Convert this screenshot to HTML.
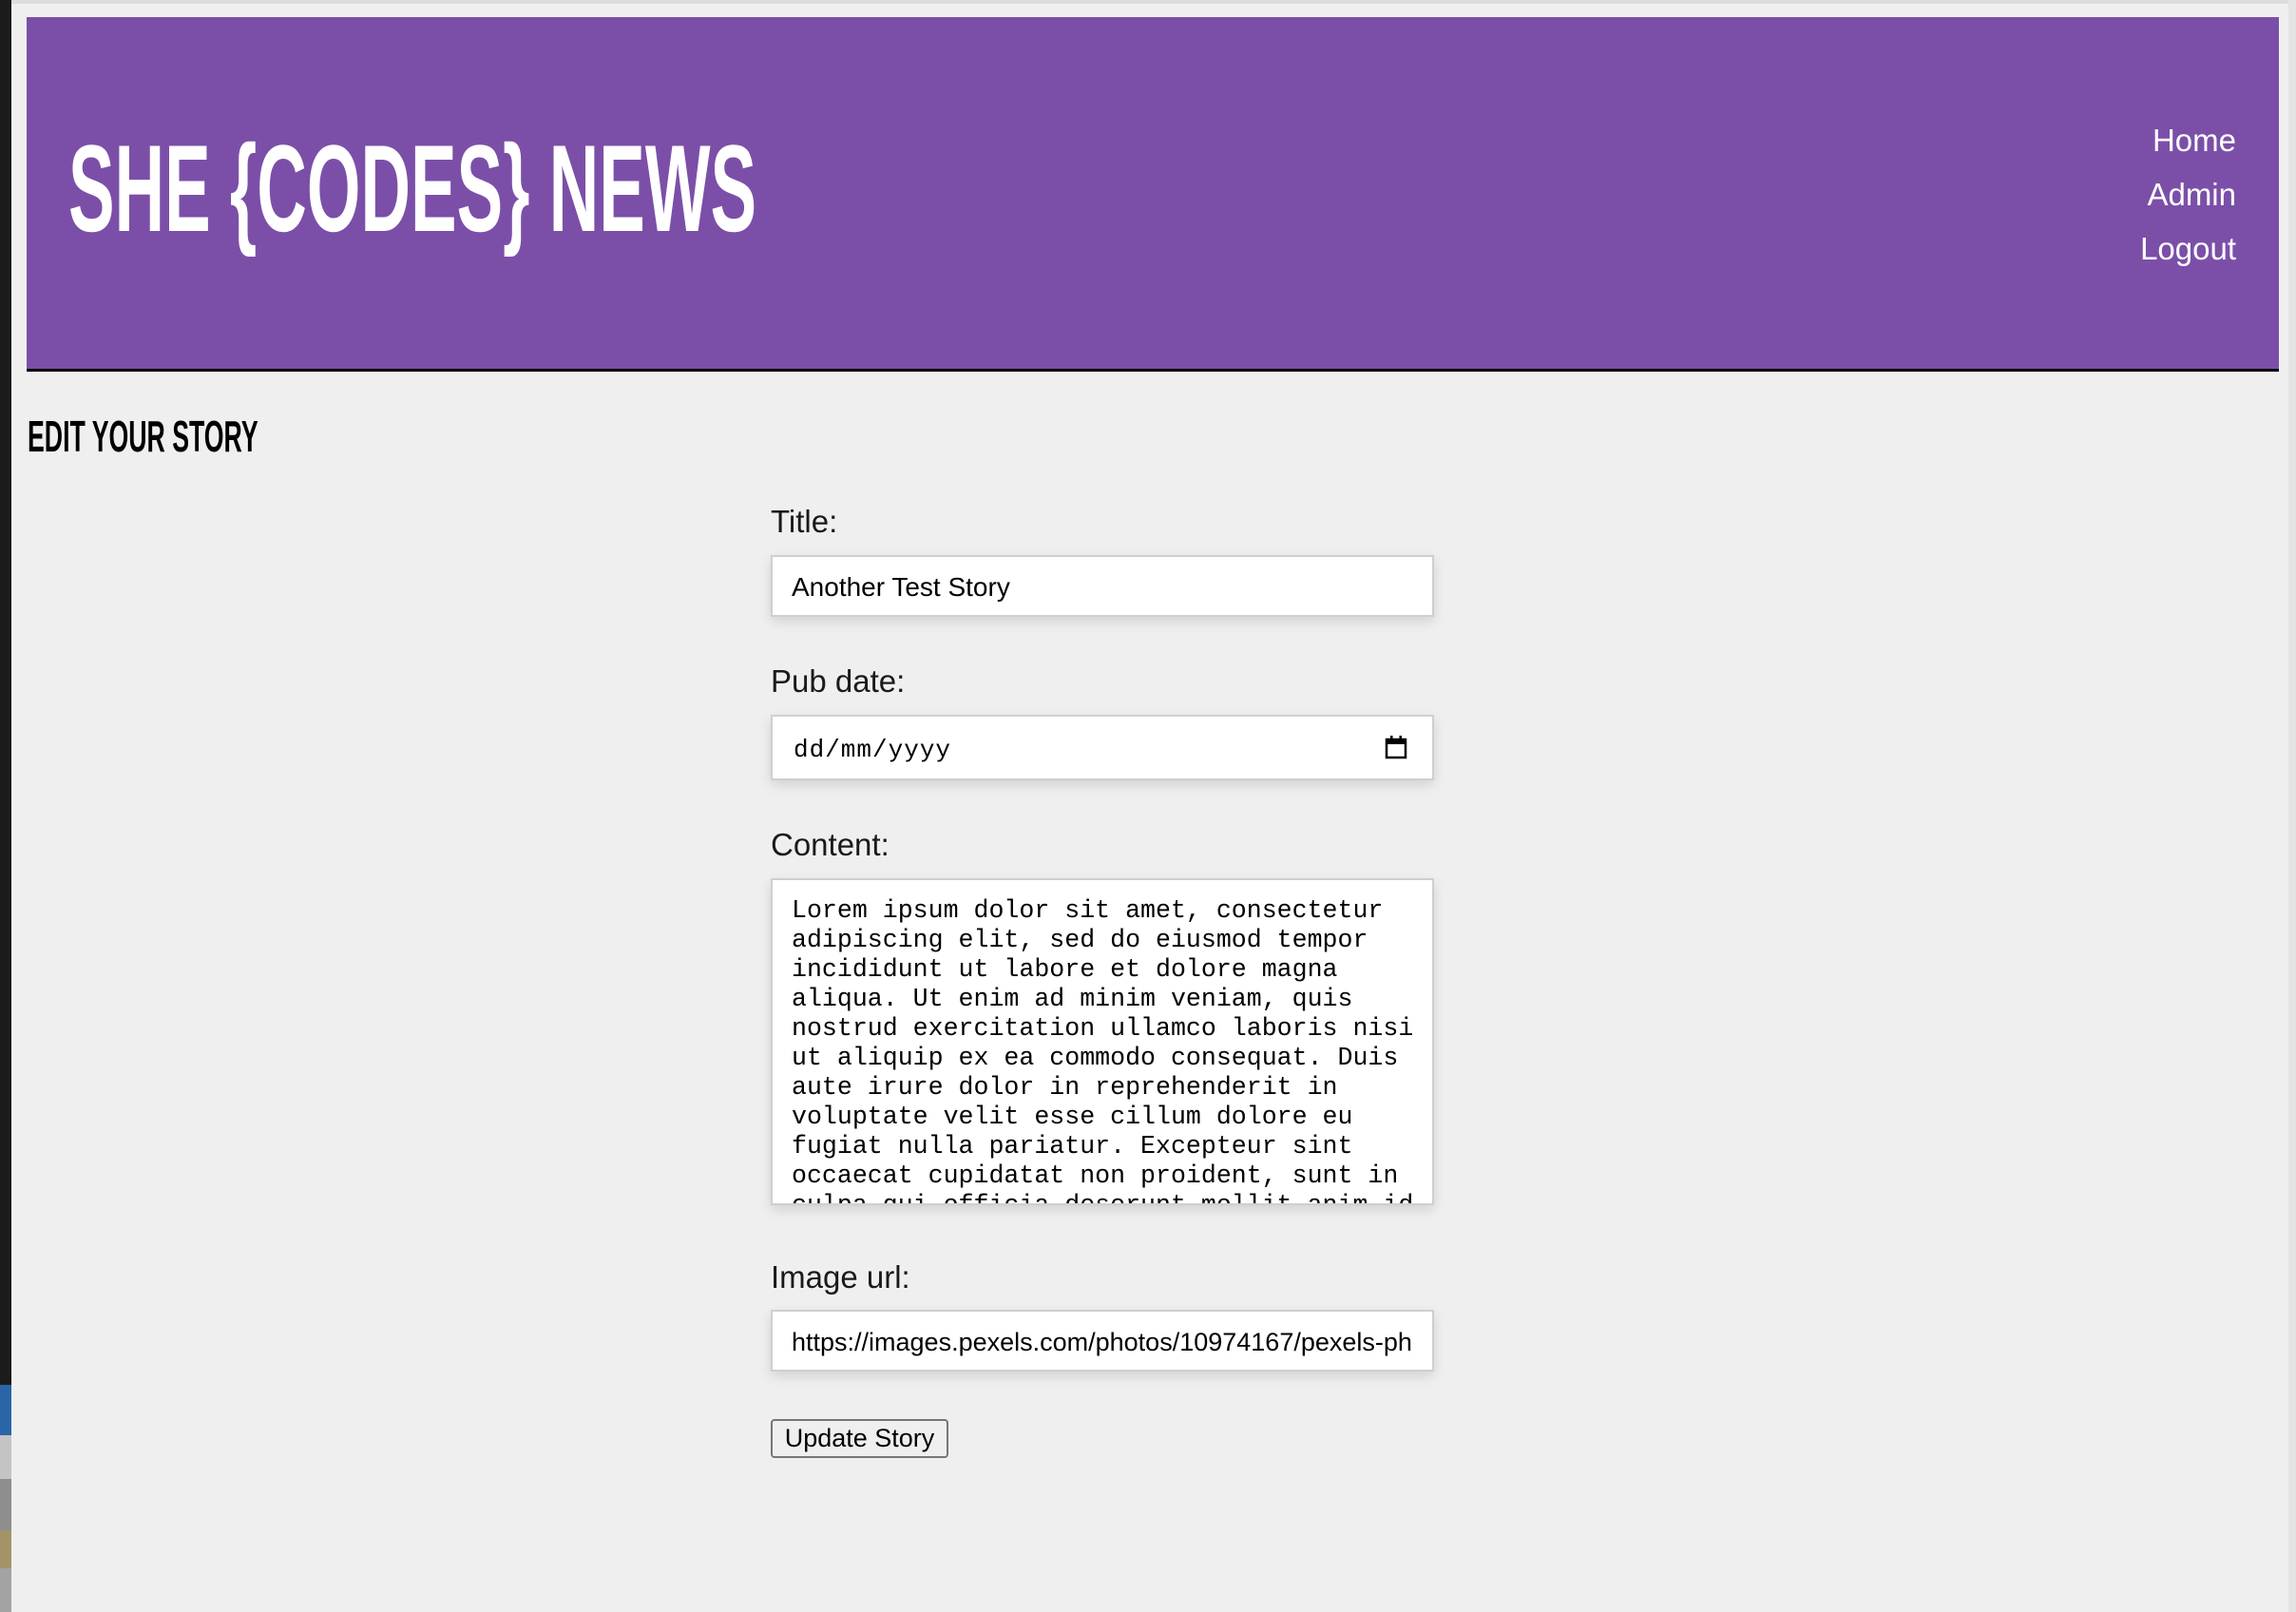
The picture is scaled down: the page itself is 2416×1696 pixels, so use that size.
<!DOCTYPE html>
<html><head><meta charset="utf-8"><style>
*{box-sizing:border-box;margin:0;padding:0}
body{width:2416px;height:1696px;background:#efefef;position:relative;overflow:hidden;font-family:"Liberation Sans",sans-serif}
.abs{position:absolute}
.lbl{position:absolute;left:811px;font-size:33px;color:#1a1a1a;line-height:1}
.inp{position:absolute;left:811px;width:698px;background:#fff;border:2px solid #cfcfcf;box-shadow:0 5px 12px rgba(0,0,0,.12)}
</style></head><body>
<div class="abs" style="left:0;top:0;width:2416px;height:4px;background:#dcdcdc"></div>
<div class="abs" style="left:0;top:0;width:12px;height:1457px;background:#1b1b1b"></div>
<div class="abs" style="left:0;top:1457px;width:12px;height:53px;background:#2a65a8"></div>
<div class="abs" style="left:0;top:1510px;width:12px;height:46px;background:#c4c4c4"></div>
<div class="abs" style="left:0;top:1556px;width:12px;height:54px;background:#8e8e8e"></div>
<div class="abs" style="left:0;top:1610px;width:12px;height:40px;background:#a39468"></div>
<div class="abs" style="left:0;top:1650px;width:12px;height:46px;background:#a3a3a3"></div>
<div class="abs" style="left:2408px;top:0;width:8px;height:1696px;background:#e4e4e4"></div>

<div class="abs" style="left:28px;top:18px;width:2370px;height:373px;background:#7b4fa8;border-bottom:3px solid #000"></div>
<div class="abs" style="left:72px;top:133px;font-weight:bold;font-size:130px;color:#fff;line-height:1;white-space:nowrap;transform:scaleX(0.56);transform-origin:left top">SHE {CODES} NEWS</div>
<div class="abs" style="right:63px;top:119px;text-align:right;color:#fff;font-size:33px;line-height:57px">Home<br>Admin<br>Logout</div>

<div class="abs" style="left:29px;top:436px;font-weight:bold;font-size:46px;color:#000;line-height:1;white-space:nowrap;transform:scaleX(0.58);transform-origin:left top">EDIT YOUR STORY</div>

<div class="lbl" style="top:532px">Title:</div>
<div class="inp" style="top:584px;height:65px;font-size:28px;padding:16px 0 0 20px;color:#000">Another Test Story</div>

<div class="lbl" style="top:700px">Pub date:</div>
<div class="inp" style="top:752px;height:69px;font-family:'Liberation Mono',monospace;font-size:26px;letter-spacing:1px;padding:20px 0 0 22px;color:#000">dd/mm/yyyy
<svg class="abs" style="right:26px;top:20px" width="24" height="26" viewBox="0 0 24 26"><rect x="2" y="4" width="20" height="19" fill="none" stroke="#000" stroke-width="2.5"/><rect x="2" y="4" width="20" height="5" fill="#000"/><rect x="6" y="0" width="2.5" height="5" fill="#000"/><rect x="15.5" y="0" width="2.5" height="5" fill="#000"/></svg></div>

<div class="lbl" style="top:872px">Content:</div>
<div class="inp" style="top:924px;height:344px;overflow:hidden;font-family:'Liberation Mono',monospace;font-size:26.6px;line-height:31px;padding:17px 10px 0 20px;color:#000;white-space:pre">Lorem ipsum dolor sit amet, consectetur
adipiscing elit, sed do eiusmod tempor
incididunt ut labore et dolore magna
aliqua. Ut enim ad minim veniam, quis
nostrud exercitation ullamco laboris nisi
ut aliquip ex ea commodo consequat. Duis
aute irure dolor in reprehenderit in
voluptate velit esse cillum dolore eu
fugiat nulla pariatur. Excepteur sint
occaecat cupidatat non proident, sunt in
culpa qui officia deserunt mollit anim id</div>

<div class="lbl" style="top:1327px">Image url:</div>
<div class="inp" style="top:1378px;height:65px;font-size:27px;padding:17px 20px 0 20px;color:#000;overflow:hidden;white-space:nowrap"><div style="overflow:hidden">https://images.pexels.com/photos/10974167/pexels-photo</div></div>

<div class="abs" style="left:811px;top:1493px;width:187px;height:41px;border:2px solid #767676;border-radius:4px;background:#efefef;font-size:27px;line-height:37px;text-align:center;color:#000">Update Story</div>
</body></html>
